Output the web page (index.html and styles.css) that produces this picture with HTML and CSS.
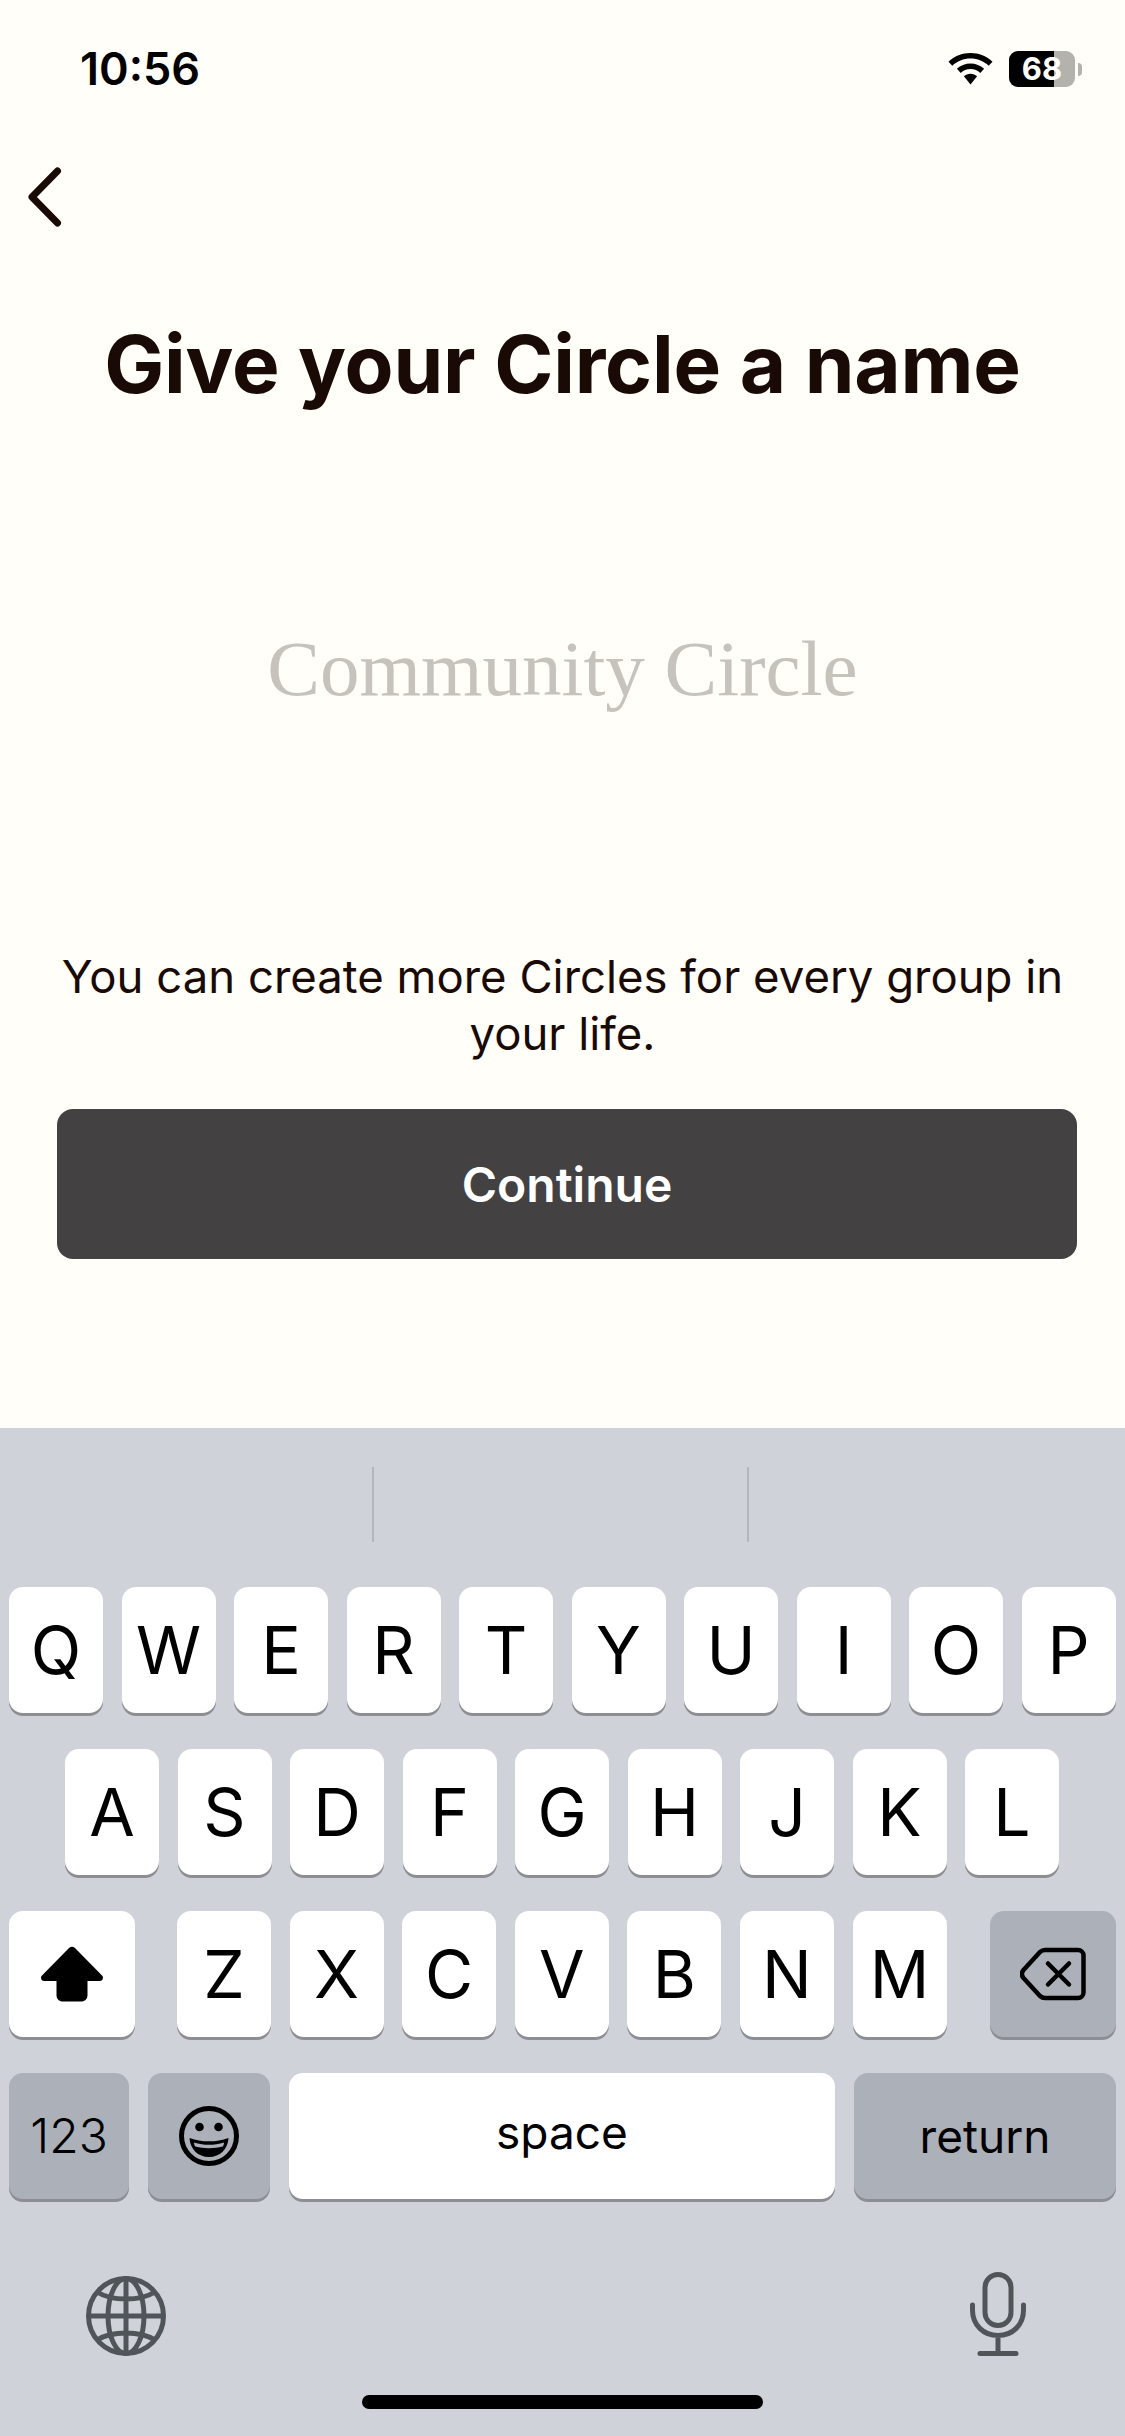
FILE: index.html
```html
<!DOCTYPE html>
<html lang="en">
<head>
<meta charset="utf-8">
<title>Give your Circle a name</title>
<link rel="stylesheet" href="styles.css">
</head>
<body>
<div class="screen">
  <main class="content">
    <header class="status">
      <span class="time">10:56</span>
      <div class="status-icons">
        <svg class="wifi" width="45" height="32" viewBox="0 0 45 32"><path d="M22.5 0C14 0 6.300 3.300 .5 8.700L4.300 12.800C9.100 8.300 15.500 5.600 22.500 5.600S35.900 8.300 40.700 12.800L44.500 8.700C38.700 3.300 31 0 22.500 0Z"/><path d="M22.500 10.400C17.300 10.400 12.500 12.400 8.900 15.800L12.700 19.900C15.300 17.500 18.700 16 22.500 16S29.700 17.500 32.300 19.900L36.100 15.800C32.500 12.400 27.700 10.400 22.500 10.400Z"/><path d="M22.500 20.800C20 20.800 17.700 21.800 15.900 23.300L22.500 31.500 29.100 23.300C27.300 21.800 25 20.800 22.500 20.800Z"/></svg>
        <div class="battery">
          <span class="battery-fill"></span>
          <span class="battery-text">68</span>
        </div>
        <span class="battery-nub"></span>
      </div>
    </header>
    <nav class="nav">
      <svg class="back" width="36" height="60" viewBox="0 0 36 60"><path d="M31.500 4 6 30 31.500 56" fill="none" stroke="#1a0a05" stroke-width="7" stroke-linecap="round" stroke-linejoin="round"/></svg>
    </nav>
    <h1 class="title">Give your Circle a name</h1>
    <div class="name-field">Community Circle</div>
    <p class="helper">You can create more Circles for every group in your life.</p>
    <button class="continue">Continue</button>
  </main>
  <section class="keyboard">
    <div class="suggestions"><i class="divider"></i><i class="divider"></i></div>
    <div class="row">
      <span class="key">Q</span><span class="key">W</span><span class="key">E</span><span class="key">R</span><span class="key">T</span><span class="key">Y</span><span class="key">U</span><span class="key">I</span><span class="key">O</span><span class="key">P</span>
    </div>
    <div class="row row-home">
      <span class="key">A</span><span class="key">S</span><span class="key">D</span><span class="key">F</span><span class="key">G</span><span class="key">H</span><span class="key">J</span><span class="key">K</span><span class="key">L</span>
    </div>
    <div class="row row-shift">
      <span class="key key-wide"><svg width="64" height="56" viewBox="0 0 64 56"><path d="M29 2 1.500 30C.300 32 1.500 35 4 35H16.500V49C16.500 53 19 55.500 23 55.500H41C45 55.500 47.500 53 47.500 49V35H60C62.500 35 63.700 32 62.500 30L35 2C33 .300 31 .300 29 2Z"/></svg></span>
      <div class="letters">
        <span class="key">Z</span><span class="key">X</span><span class="key">C</span><span class="key">V</span><span class="key">B</span><span class="key">N</span><span class="key">M</span>
      </div>
      <span class="key key-wide key-fn key-delete"><svg width="66" height="54" viewBox="0 0 66 54" fill="none" stroke="#000" stroke-width="4.500" stroke-linecap="round" stroke-linejoin="round"><path d="M25 3H58C61 3 63.500 5.500 63.500 8.500V45.500C63.500 48.500 61 51 58 51H25C23 51 21.500 50.300 20 49L3.500 31C1.500 28.500 1.500 25.500 3.500 23L20 5C21.500 3.700 23 3 25 3Z"/><path d="M28 16.500 49 37.500M49 16.500 28 37.500"/></svg></span>
    </div>
    <div class="row row-bottom">
      <span class="key key-fn key-123">123</span>
      <span class="key key-fn key-emoji"><svg width="62" height="62" viewBox="0 0 62 62"><circle cx="31" cy="31" r="27.500" fill="none" stroke="#000" stroke-width="5"/><circle cx="21.500" cy="22" r="4.300"/><circle cx="40.500" cy="22" r="4.300"/><path d="M11.500 33C18 35.500 24 36.300 31 36.300S44 35.500 50.500 33C50 44 42 52 31 52S12 44 11.500 33Z"/><path d="M16 37.500C21 39 26 39.800 31 39.800S41 39 46 37.500C46 39 45.500 40.500 44.800 41.500 40 42.800 36 43.200 31 43.200S22 42.800 17.200 41.500C16.500 40.500 16 39 16 37.500Z" fill="#acb1b9"/></svg></span>
      <span class="key key-space">space</span>
      <span class="key key-fn key-return">return</span>
    </div>
    <div class="tools">
      <svg width="80" height="80" viewBox="0 0 80 80" fill="none" stroke="#50555a" stroke-width="5"><circle cx="40" cy="40" r="37.500"/><ellipse cx="40" cy="40" rx="18" ry="37.500"/><path d="M40 2.500V77.500M2.500 40H77.500M11 16C19 21 29 23 40 23S61 21 69 16M11 64C19 59 29 57 40 57S61 59 69 64"/></svg>
      <svg width="56" height="84" viewBox="0 0 56 84" fill="none" stroke="#50555a" stroke-width="5" stroke-linecap="round"><rect x="15" y="2.500" width="26" height="51" rx="13"/><path d="M2.500 33V38C2.500 53 13.500 63.500 28 63.500S53.500 53 53.500 38V33M28 63.500V80M10 81.500H46"/></svg>
    </div>
    <div class="home-bar"></div>
  </section>
</div>
</body>
</html>
```

FILE: styles.css
```css
* {
  box-sizing: border-box;
}

html,
body {
  margin: 0;
  padding: 0;
}

body {
  background: #fffef8;
  font-family: Inter, "Liberation Sans", sans-serif;
}

.screen {
  width: 1125px;
  height: 2436px;
  display: flex;
  flex-direction: column;
  overflow: hidden;
}

.content {
  height: 1428px;
  flex: none;
  background: #fffef8;
  color: #1a0a05;
}

.status {
  height: 167px;
  padding: 46px 43px 0 80px;
  display: flex;
  justify-content: space-between;
  align-items: flex-start;
  color: #000;
}

.time {
  font-size: 45px;
  font-weight: 600;
  line-height: 46px;
}

.status-icons {
  display: flex;
  align-items: center;
  height: 46px;
}

.wifi {
  margin-right: 16px;
}

.battery {
  position: relative;
  width: 66px;
  height: 36px;
  border-radius: 9px;
  background: #b3b2ac;
  overflow: hidden;
  display: flex;
  align-items: center;
  justify-content: center;
}

.battery-fill {
  position: absolute;
  left: 0;
  top: 0;
  bottom: 0;
  width: 45px;
  background: #000;
}

.battery-text {
  position: relative;
  color: #fff;
  font-size: 31px;
  font-weight: 700;
  line-height: 36px;
}

.battery-nub {
  width: 4px;
  height: 13px;
  margin-left: 3px;
  border-radius: 0 4px 4px 0;
  background: #b3b2ac;
}

.nav {
  height: 60px;
  padding-left: 26px;
  display: flex;
}

.back {
  display: block;
}

.title {
  margin: 87px 0 0;
  height: 100px;
  text-align: center;
  font-size: 80px;
  font-weight: 700;
  letter-spacing: -0.2px;
  line-height: 100px;
}

.name-field {
  margin-top: 205px;
  height: 100px;
  text-align: center;
  font-family: "Liberation Serif", serif;
  font-size: 79px;
  line-height: 100px;
  color: #c6c3bd;
}

.helper {
  margin: 229px 0 0;
  padding: 0 50px;
  text-align: center;
  font-size: 45.500px;
  line-height: 57px;
}

.continue {
  display: block;
  width: 1020px;
  height: 150px;
  margin: 47px 0 0 57px;
  padding: 0;
  border: 0;
  border-radius: 16px;
  background: #434142;
  color: #fff;
  font-family: inherit;
  font-size: 48px;
  font-weight: 600;
}

.keyboard {
  flex: 1;
  background: #d0d2d9;
  display: flex;
  flex-direction: column;
  color: #000;
}

.suggestions {
  height: 159px;
  padding: 39px 0 0 372px;
  display: flex;
  gap: 373px;
  align-items: flex-start;
}

.divider {
  display: block;
  width: 2px;
  height: 75px;
  background: #b4b6bc;
}

.row {
  height: 126px;
  margin-bottom: 36px;
  padding-left: 9px;
  display: flex;
  gap: 18.500px;
}

.row-home {
  padding-left: 65px;
}

.row-shift {
  gap: 42px;
}

.letters {
  display: flex;
  gap: 18.600px;
}

.key-delete {
  margin-left: 1px;
}

.row-bottom {
  gap: 19px;
}

.key {
  width: 94px;
  height: 126px;
  flex: none;
  display: flex;
  align-items: center;
  justify-content: center;
  border-radius: 14px;
  background: #fff;
  box-shadow: 0 3px 0 #8c8e93;
  font-size: 66px;
  font-weight: 380;
  line-height: 1;
}

.key-wide {
  width: 126px;
}

.key-fn {
  background: #acb1b9;
}

.key-123 {
  width: 120px;
  font-size: 48px;
  font-weight: 350;
}

.key-emoji {
  width: 122px;
}

.key-space {
  width: 546px;
  font-size: 46px;
  font-weight: 400;
  padding-bottom: 8px;
}

.key-return {
  width: 262px;
  font-size: 46px;
  font-weight: 400;
}

.tools {
  margin-top: 37px;
  padding: 0 99px 0 86px;
  display: flex;
  justify-content: space-between;
  align-items: flex-end;
}

.home-bar {
  width: 401px;
  height: 14px;
  margin: 39px 0 0 362px;
  border-radius: 7px;
  background: #000;
}
```
